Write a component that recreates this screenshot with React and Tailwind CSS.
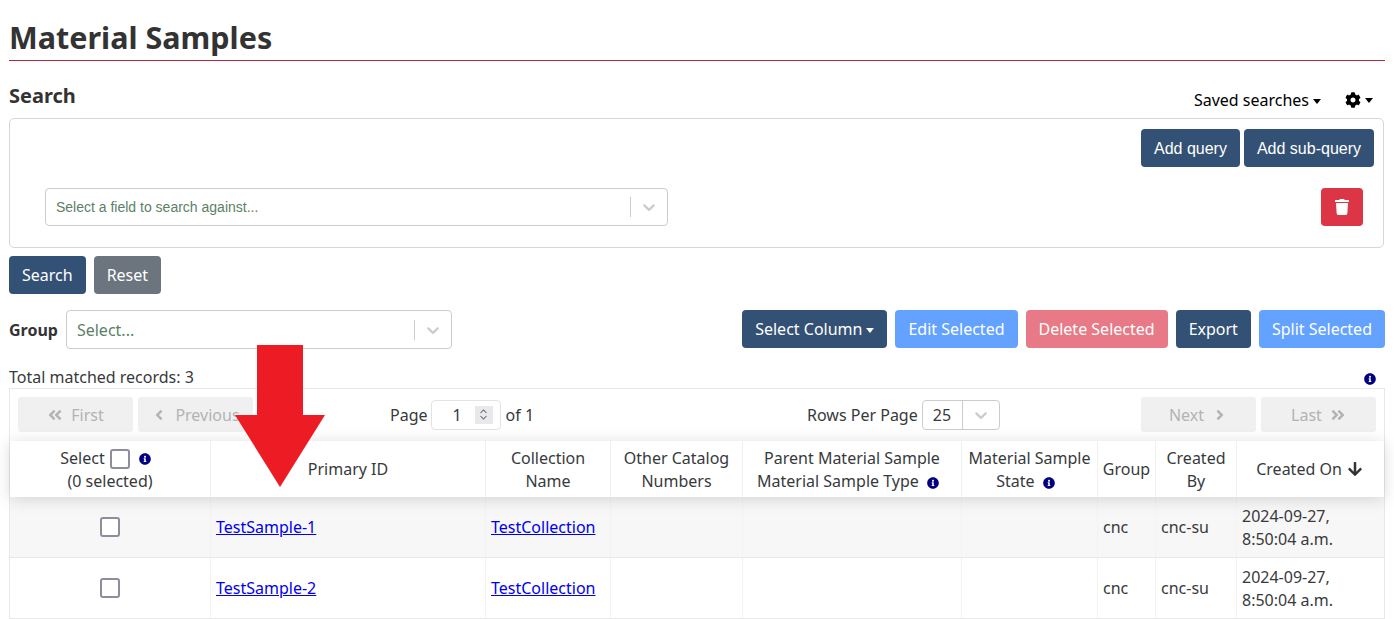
import { FaCog, FaTrash, FaInfoCircle, FaAngleDoubleLeft, FaAngleDoubleRight, FaAngleLeft, FaAngleRight, FaArrowDown } from "react-icons/fa";

const noto = "font-['Noto_Sans',sans-serif]";
const cols = "grid grid-cols-[201px_275px_125px_132px_219px_136px_58px_81px_147px]";

function Chevron() {
  return (
    <svg viewBox="0 0 20 20" className="w-5 h-5 fill-[#ccc]">
      <path d="M4.516 7.548c0.436-0.446 1.043-0.481 1.576 0l3.908 3.747 3.908-3.747c0.533-0.481 1.141-0.446 1.574 0 0.436 0.445 0.408 1.197 0 1.615-0.406 0.418-4.695 4.502-4.695 4.502-0.217 0.223-0.502 0.335-0.787 0.335s-0.57-0.112-0.789-0.335c0 0-4.287-4.084-4.695-4.502s-0.436-1.17 0-1.615z" />
    </svg>
  );
}

function Info({ className = "" }) {
  return <FaInfoCircle className={`inline-block text-[12px] text-[#000080] ${className}`} />;
}

function Btn({ color, className = "", children }) {
  return (
    <button className={`h-[38px] px-[13px] rounded-[4px] text-white text-[16px] ${color} ${className}`}>
      {children}
    </button>
  );
}

function PageBtn({ className = "", children }) {
  return (
    <button className={`h-[35px] rounded-[3px] bg-[#f0f0f0] text-[#b3b3b3] text-[16px] flex items-center justify-center gap-2 ${className}`}>
      {children}
    </button>
  );
}

function Caret() {
  return <span className="inline-block ml-1 align-middle border-x-[4px] border-x-transparent border-t-[5px] border-t-current" />;
}

// two-line headers sit 1px lower than single-line ones
function HeadCell({ last, two, children }) {
  return (
    <div className={`px-1 flex flex-col items-center justify-center text-center leading-[23px] ${two ? "pt-[2px]" : ""} ${last ? "" : "border-r border-[#f0f0f0]"}`}>
      {children}
    </div>
  );
}

function Cell({ last, children }) {
  return (
    <div className={`px-[5px] flex items-center leading-[23px] ${last ? "pt-[2px]" : "border-r border-[#f3f3f3]"}`}>
      {children}
    </div>
  );
}

function Row({ id, shaded }) {
  return (
    <div className={`${cols} h-[61px] border-b border-[#e8e8e8] ${shaded ? "bg-[#f7f7f7]" : "bg-white"}`}>
      <Cell>
        <span className="mx-auto w-5 h-5 rounded-[3px] border-2 border-[#8f8d9d] bg-white" />
      </Cell>
      <Cell>
        <a href="#" className="text-[#0000ee] underline">{id}</a>
      </Cell>
      <Cell>
        <a href="#" className="text-[#0000ee] underline">TestCollection</a>
      </Cell>
      <Cell />
      <Cell />
      <Cell />
      <Cell>cnc</Cell>
      <Cell>cnc-su</Cell>
      <Cell last>
        <span>2024-09-27,<br />8:50:04 a.m.</span>
      </Cell>
    </div>
  );
}

export default function App() {
  return (
    <div className={`relative h-screen overflow-hidden bg-white px-[9px] text-[16px] text-[#373a3c] ${noto}`}>
      <h1 className="pt-[16px] h-[61px] border-b border-[#b5283a] text-[30.5px] leading-[43px] font-bold text-[#333]">
        Material Samples
      </h1>

      <div className="h-[57px] flex items-start justify-between">
        <h2 className="mt-[21px] text-[20px] leading-[27px] font-bold text-[#333]">Search</h2>
        <div className="mt-[27px] mr-[12px] flex items-center text-black">
          <span>Saved searches<Caret /></span>
          <span className="ml-[24px] flex items-center"><FaCog className="text-[16px]" /><Caret /></span>
        </div>
      </div>

      <div className="h-[130px] mr-[1px] rounded-[5px] border border-[#d8d7d0] px-[35px] pt-[10px] font-['Liberation_Sans',sans-serif]">
        <div className="flex justify-end gap-1 -mr-[26px]">
          <Btn color="bg-[#335175]" className="pt-[2px]">Add query</Btn>
          <Btn color="bg-[#335175]" className="pt-[2px]">Add sub-query</Btn>
        </div>
        <div className="mt-[21px] flex items-center justify-between -mr-[15px]">
          <div className="w-[623px] h-[38px] rounded-[4px] border border-[#ccc] flex items-center pl-[10px] pr-[8px]">
            <span className="flex-1 text-[14px] text-[#5c7f67]">Select a field to search against...</span>
            <span className="w-px h-5 bg-[#ccc] mr-2" />
            <Chevron />
          </div>
          <button className="w-[42px] h-[38px] rounded-[4px] bg-[#dc3545] text-white flex items-center justify-center">
            <FaTrash className="text-[16px]" />
          </button>
        </div>
      </div>

      <div className="mt-[8px] flex gap-2">
        <Btn color="bg-[#335175]">Search</Btn>
        <Btn color="bg-[#6c757d]">Reset</Btn>
      </div>

      <div className="mt-[16px] flex items-start">
        <span className="font-bold text-[#333] mt-[8px]">Group</span>
        <div className="ml-2 w-[386px] h-[39px] rounded-[4px] border border-[#ccc] flex items-center pl-[10px] pr-[8px]">
          <span className="flex-1 text-[#5c7f67]">Select...</span>
          <span className="w-px h-5 bg-[#ccc] mr-2" />
          <Chevron />
        </div>
        <div className="ml-auto flex gap-2">
          <Btn color="bg-[#335175]">Select Column<Caret /></Btn>
          <Btn color="bg-[#64a2ff]">Edit Selected</Btn>
          <Btn color="bg-[#e77a86]">Delete Selected</Btn>
          <Btn color="bg-[#335175]">Export</Btn>
          <Btn color="bg-[#64a2ff]">Split Selected</Btn>
        </div>
      </div>

      <div className="h-[39px] flex items-end justify-between">
        <span className="leading-[22px]">Total matched records: 3</span>
        <Info className="mr-[9px] mb-[3px]" />
      </div>

      <div className="border border-[#e8e8e8] border-b-0 w-[1376px]">
        <div className="h-[52px] px-2 pt-[8px] flex">
          <div className="w-[235px] flex gap-[5px]">
            <PageBtn className="w-[115px]"><FaAngleDoubleLeft className="text-[16px]" /> First</PageBtn>
            <PageBtn className="w-[115px]"><FaAngleLeft className="text-[16px]" /> Previous</PageBtn>
          </div>
          <div className="w-[137px]" />
          <div className="flex items-center h-[35px]">
            <span>Page</span>
            <div className="ml-[3px] w-[70px] h-[30px] rounded-[4px] border border-[#e3e3e3] flex items-center justify-end pr-[7px]">
              <span className="mr-[13px]">1</span>
              <span className="w-[18px] h-[18px] bg-[#e9e9ed] flex items-center justify-center">
                <svg viewBox="0 0 12 16" className="w-[9px] h-[13px] fill-none stroke-[#666] stroke-[1.4]">
                  <path d="M2 6l4-4 4 4M2 10l4 4 4-4" />
                </svg>
              </span>
            </div>
            <span className="ml-[5px]">of 1</span>
          </div>
          <div className="ml-[273px] flex items-center h-[35px]">
            <span>Rows Per Page</span>
            <div className="ml-1 w-[78px] h-[30px] rounded-[4px] border border-[#ccc] flex items-center">
              <span className="w-[30px] pl-[10px] shrink-0 mr-[9px]">25</span>
              <span className="w-px h-full bg-[#ccc]" />
              <span className="flex-1 flex justify-center"><Chevron /></span>
            </div>
          </div>
          <div className="ml-auto flex gap-[5px]">
            <PageBtn className="w-[115px]">Next <FaAngleRight className="text-[16px]" /></PageBtn>
            <PageBtn className="w-[115px]">Last <FaAngleDoubleRight className="text-[16px]" /></PageBtn>
          </div>
        </div>

        <div className={`${cols} h-[56px] bg-white relative shadow-[0_2px_15px_0_rgba(0,0,0,0.15)]`}>
          <HeadCell two>
            <span className="flex items-center mr-[9px]">
              Select
              <span className="ml-[5px] w-5 h-5 rounded-[3px] border-2 border-[#8f8d9d] bg-white" />
              <Info className="ml-[9px]" />
            </span>
            <span>(0 selected)</span>
          </HeadCell>
          <HeadCell>Primary ID</HeadCell>
          <HeadCell two>Collection<br />Name</HeadCell>
          <HeadCell two>Other Catalog<br />Numbers</HeadCell>
          <HeadCell two>
            <span>Parent Material Sample</span>
            <span className="mr-[8px]">Material Sample Type <Info className="ml-1" /></span>
          </HeadCell>
          <HeadCell two>
            <span>Material Sample</span>
            <span className="mr-[8px]">State <Info className="ml-1" /></span>
          </HeadCell>
          <HeadCell>Group</HeadCell>
          <HeadCell two>Created<br />By</HeadCell>
          <HeadCell last>
            <span className="flex items-center gap-[5px] mr-[2px]">Created On <FaArrowDown className="text-[16px] text-[#333]" /></span>
          </HeadCell>
        </div>

        <Row id="TestSample-1" shaded />
        <Row id="TestSample-2" />
      </div>

      <svg viewBox="0 0 90 142" className="absolute left-[235px] top-[345px] w-[90px] h-[142px]">
        <path d="M22 0h46v70h22L45 142 0 70h22z" fill="#ed1c24" />
      </svg>
    </div>
  );
}
